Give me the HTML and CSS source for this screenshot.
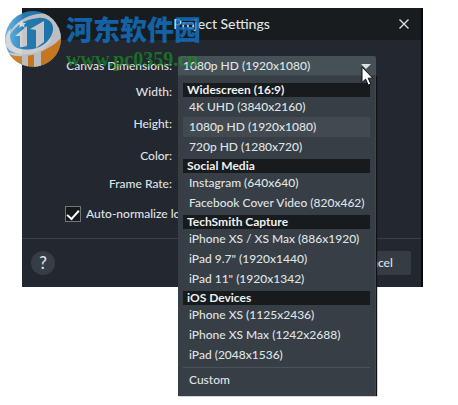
FILE: index.html
```html
<!DOCTYPE html>
<html lang="en">
<head>
<meta charset="utf-8">
<meta name="viewport" content="width=device-width, initial-scale=1">
<title>Project Settings</title>
<link rel="stylesheet" href="styles.css">
</head>
<body>
<main class="dialog">
  <header class="titlebar">
    <h1 class="title">Project Settings</h1>
    <button class="close" type="button" aria-label="Close">
      <svg width="12" height="12" viewBox="0 0 12 12"><path d="M1.500 1.500l9 9M10.500 1.500l-9 9" fill="none" stroke="#dfe3e5" stroke-width="1.300"/></svg>
    </button>
  </header>
  <form class="settings">
    <div class="row row-first">
      <label for="canvas">Canvas Dimensions:</label>
      <div class="combo">
        <select id="canvas" class="combo-field"><option>1080p HD (1920x1080)</option></select>
        <svg class="arrow" width="10" height="6" viewBox="0 0 10 6"><path d="M0 0h10L5 5z" fill="#dce1e3"/></svg>
        <div class="menu" role="listbox" aria-label="Canvas Dimensions">
          <section class="group">
            <h2>Widescreen (16:9)</h2>
            <div class="option" role="option">4K UHD (3840x2160)</div>
            <div class="option selected" role="option" aria-selected="true">1080p HD (1920x1080)</div>
            <div class="option" role="option">720p HD (1280x720)</div>
          </section>
          <section class="group">
            <h2>Social Media</h2>
            <div class="option" role="option">Instagram (640x640)</div>
            <div class="option" role="option">Facebook Cover Video (820x462)</div>
          </section>
          <section class="group">
            <h2>TechSmith Capture</h2>
            <div class="option" role="option">iPhone XS / XS Max (886x1920)</div>
            <div class="option" role="option">iPad 9.7" (1920x1440)</div>
            <div class="option" role="option">iPad 11" (1920x1342)</div>
          </section>
          <section class="group">
            <h2>iOS Devices</h2>
            <div class="option" role="option">iPhone XS (1125x2436)</div>
            <div class="option" role="option">iPhone XS Max (1242x2688)</div>
            <div class="option" role="option">iPad (2048x1536)</div>
          </section>
          <div class="group custom">
            <div class="option" role="option">Custom</div>
          </div>
        </div>
        <svg class="pointer" width="13" height="20" viewBox="0 0 13 20"><path d="M1 1v15.500l3.600-3.400 2.600 6 2.600-1.100-2.600-5.800h4.600z" fill="#fff" stroke="#111" stroke-width="1"/></svg>
      </div>
    </div>
    <div class="row"><label for="width">Width:</label><input id="width" class="field" type="text"></div>
    <div class="row"><label for="height">Height:</label><input id="height" class="field" type="text"></div>
    <div class="row"><label for="color">Color:</label><input id="color" class="field" type="text"></div>
    <div class="row row-last"><label for="rate">Frame Rate:</label><input id="rate" class="field" type="text"></div>
    <label class="check"><input type="checkbox" checked><span>Auto-normalize lo</span></label>
  </form>
  <footer class="actions">
    <button class="help" type="button" aria-label="Help">?</button>
    <button class="cancel" type="button">Cancel</button>
  </footer>
</main>
<div class="watermark">
  <svg width="58" height="58" viewBox="0 0 58 58">
    <defs>
      <clipPath id="disc"><circle cx="29" cy="29" r="28"/></clipPath>
      <linearGradient id="sky"><stop offset="0" stop-color="#63b4e4"/><stop offset=".35" stop-color="#2480b8"/><stop offset="1" stop-color="#1d74ac"/></linearGradient>
    </defs>
    <g clip-path="url(#disc)">
      <path d="M0 0h58v58H0z" fill="url(#sky)"/>
      <path d="M5 24C11 12 22 6 33 4c5-1 10-1 14 2l11 14v10C52 40 39 48 24 49 14 49 7 46 3 42c7 2 16 2 24-1 12-4 21-12 22-21 1-8-6-13-15-12C22 9 10 16 5 27z" fill="#c6c7cb"/>
      <path d="M2 36c-2-6 0-13 5-18-2 8-1 14 3 18 5 4 12 4 19 3 8-2 15-6 19-12-2 9-11 15-22 17-11 1-20-1-24-8z" fill="#d3d5d9"/>
      <path d="M4 44c14 5 29 1 40-6 7-4 12-8 14-12v32H12z" fill="#cf7b21"/>
      <path d="M11 26l12-10v20c-3 1-5 1-7 1V26z" fill="#cfd0d4"/>
      <path d="M26 19l14-8v21l-8 6V20z" fill="#cfd0d4"/>
      <path d="M18 46l6-1v13h-6zM30 44l7-3v17h-7z" fill="#c3c4c8"/>
      <path d="M18 10l1 3h3l-2 2 1 3-3-2-3 2 1-3-2-2h3z" fill="#d5e0e8"/>
    </g>
  </svg>
  <div class="watermark-text">
    <span class="site-name" lang="zh-CN">河东软件园</span>
    <span class="site-url">www.pc0359.cn</span>
  </div>
</div>
</body>
</html>
```
FILE: styles.css
```css
* { box-sizing: border-box; }

body {
  min-height: 100vh;
  margin: 0;
  padding: 8px 35px 8px 22px;
  background: #fff;
  color: #dfe3e5;
  font: 12px/20px Lato, "Open Sans", sans-serif;
  font-weight: 500;
}

button, input, select { font: inherit; color: inherit; }
button { padding: 0; border: 0; cursor: pointer; }

.dialog {
  background: #23272f;
  border-right: 2px solid #08090b;
}

.titlebar {
  display: grid;
  grid-template-columns: 1fr auto 1fr;
  align-items: center;
  height: 32px;
  padding: 0 11px;
  background: #181c1f;
}

.title {
  grid-column: 2;
  margin: 0;
  font-size: 14px;
  line-height: 28px;
  font-weight: 500;
}

.close {
  display: flex;
  justify-self: end;
  background: none;
}

.settings {
  display: flex;
  flex-direction: column;
  gap: 12px;
  padding: 16px 45px 16px 0;
}

.row {
  display: grid;
  grid-template-columns: 150px 1fr;
  column-gap: 6px;
  height: 20px;
  line-height: 20px;
  text-align: right;
}

.row-first { margin-bottom: -6px; }
.row-last { margin-top: -4px; }

.field {
  width: 90%;
  height: 20px;
  border: 1px solid #3b434a;
  background: #181c1f;
}

.combo { position: relative; text-align: left; }

.combo-field {
  display: block;
  width: 100%;
  height: 20px;
  padding: 0 5px;
  border: 0;
  border-radius: 2px 2px 0 0;
  appearance: none;
  background: #465057;
  line-height: 20px;
}

.arrow { position: absolute; top: 8px; right: 5px; }

.pointer { position: absolute; top: 10px; right: 2px; z-index: 3; }

.menu {
  position: absolute;
  z-index: 2;
  top: 20px;
  left: 0;
  right: 0;
  padding: 7px 5px 6px;
  border: solid #414950;
  border-width: 0 1px 0 0;
  background: #373e45;
  box-shadow: 1px 0 1px #111;
}

.group { padding-bottom: 2px; }

.group h2 {
  margin: 0;
  padding-left: 4px;
  background: #171b1d;
  font-size: 12px;
  line-height: 14px;
  font-weight: 700;
  color: #edf0f1;
}

.option {
  height: 20px;
  padding-left: 6px;
  line-height: 20px;
  white-space: nowrap;
}

.selected { background: #434950; }

.custom {
  padding: 2px 0 0;
  border-top: 1px solid #4b5359;
}

.check {
  display: flex;
  align-items: center;
  gap: 5px;
  height: 16px;
  padding-left: 43px;
  white-space: nowrap;
}

.check input {
  display: grid;
  place-items: center;
  width: 16px;
  height: 16px;
  margin: 0;
  border: 1px solid #717579;
  appearance: none;
  background: #15191c;
}

.check input:checked::before {
  content: "";
  width: 10px;
  height: 5px;
  border: solid #fff;
  border-width: 0 0 2px 2px;
  transform: translateY(-1px) rotate(-48deg);
}

.actions {
  display: flex;
  align-items: center;
  justify-content: space-between;
  height: 49px;
  padding: 0 10px 0 9px;
  border-top: 1px solid #3a3f46;
}

.help {
  width: 24px;
  height: 24px;
  border-radius: 50%;
  background: #373d44;
  font-size: 17px;
}

.cancel {
  width: 72px;
  height: 24px;
  border-radius: 2px;
  background: #363c43;
}

.watermark {
  position: absolute;
  z-index: 1;
  top: 10px;
  left: 4px;
  display: flex;
  gap: 4px;
  pointer-events: none;
}

.watermark svg { opacity: 0.95; }

.watermark-text {
  display: flex;
  flex-direction: column;
  gap: 6px;
  padding-top: 4px;
}

.site-name {
  color: #1474c8;
  font: 900 27px/30px "Noto Sans CJK SC", sans-serif;
  opacity: 0.8;
}

.site-url {
  color: #168e28;
  font: 700 20px/18px "Liberation Serif", serif;
  opacity: 0.7;
}
```
